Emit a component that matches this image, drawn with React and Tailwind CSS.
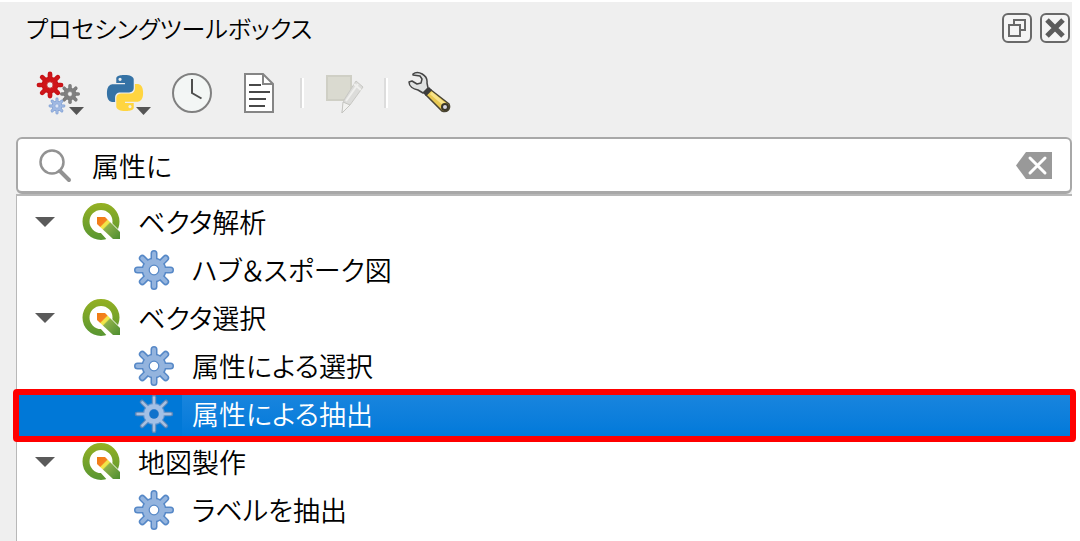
import React, { useState } from 'react';

const SPOKES = [0, 45, 90, 135, 180, 225, 270, 315];

const GROUPS = [
  { name: 'ベクタ解析', items: ['ハブ＆スポーク図'] },
  { name: 'ベクタ選択', items: ['属性による選択', '属性による抽出'] },
  { name: '地図製作', items: ['ラベルを抽出'] },
];

const SELECTED = '属性による抽出';

const PYTHON_HALF =
  'M14.25.18l.9.2.73.26.59.3.45.32.34.34.25.34.16.33.1.3.04.26.02.2-.01.13V8.5l-.05.63-.13.55-.21.46-.26.38-.3.31-.33.25-.35.19-.35.14-.33.1-.3.07-.26.04-.21.02H8.77l-.69.05-.59.14-.5.22-.41.27-.33.32-.27.35-.2.36-.15.37-.1.35-.07.32-.04.27-.02.21v3.06H3.17l-.21-.03-.28-.07-.32-.12-.35-.18-.36-.26-.36-.36-.35-.46-.32-.59-.28-.73-.21-.88-.14-1.05-.05-1.23.06-1.22.16-1.04.24-.87.32-.71.36-.57.4-.44.42-.33.42-.24.4-.16.36-.1.32-.05.24-.01h.16l.06.01h8.16v-.83H6.18l-.01-2.75-.02-.37.05-.34.11-.31.17-.28.25-.26.31-.23.38-.2.44-.18.51-.15.58-.12.64-.1.71-.06.77-.04.84-.02 1.27.05zm-6.3 1.98l-.23.33-.08.41.08.41.23.34.33.22.41.09.41-.09.33-.22.23-.34.08-.41-.08-.41-.23-.33-.33-.22-.41-.09-.41.09z';

// Gear centred on 0,0 with an outer radius of 20
const Gear = ({ fill, edge, hole, transform }) => (
  <g transform={transform} strokeLinecap="round">
    {SPOKES.map((a) => (
      <line key={a} y1="-8" y2="-16.5" stroke={edge} strokeWidth="7" transform={`rotate(${a})`} />
    ))}
    <circle r="12.5" fill={edge} />
    {SPOKES.map((a) => (
      <line key={a} y1="-8" y2="-16.5" stroke={fill} strokeWidth="4" transform={`rotate(${a})`} />
    ))}
    <circle r="11" fill={fill} />
    <circle r="4.8" fill={hole} stroke={edge} strokeWidth="1.2" />
  </g>
);

const AlgorithmIcon = ({ selected }) => (
  <svg className="h-10 w-10 shrink-0" viewBox="-20 -20 40 40">
    {selected ? (
      <g strokeLinecap="round">
        {SPOKES.map((a) => (
          <line key={a} y1="-10" y2="-17" stroke="#5f88b8" strokeWidth="4.5" transform={`rotate(${a})`} />
        ))}
        <circle r="11" fill="#5f93cf" />
        {SPOKES.map((a) => (
          <line key={a} y1="-10" y2="-16.5" stroke="#a9c0e0" strokeWidth="2.4" transform={`rotate(${a})`} />
        ))}
        <circle r="7.5" fill="none" stroke="#a3c0e6" strokeWidth="5" />
        <circle r="4.5" fill="#0f72cc" />
      </g>
    ) : (
      <Gear fill="#94b4de" edge="#5688c7" hole="#fff" />
    )}
  </svg>
);

const QgisIcon = () => (
  <svg className="h-[38px] w-[38px] shrink-0" viewBox="0 0 38 38">
    <defs>
      <linearGradient id="ring" x1="0" y1="1" x2="0" y2="37" gradientUnits="userSpaceOnUse">
        <stop offset="0" stopColor="#93b023" />
        <stop offset="1" stopColor="#589632" />
      </linearGradient>
      <linearGradient id="brush" x1="15" y1="14" x2="37" y2="36" gradientUnits="userSpaceOnUse">
        <stop offset="0" stopColor="#ee7913" />
        <stop offset="0.28" stopColor="#f58220" />
        <stop offset="0.32" stopColor="#f0e64a" />
        <stop offset="0.4" stopColor="#f0e64a" />
        <stop offset="0.44" stopColor="#8cb04a" />
        <stop offset="1" stopColor="#4f8f30" />
      </linearGradient>
    </defs>
    <circle cx="19" cy="18.500" r="15" fill="none" stroke="url(#ring)" strokeWidth="7" />
    <path d="M19 22l17 17H27L18 29zM24 14l14 14v3z" fill="#fff" />
    <path d="M15 14h8l15 15v7h-7L15 21z" fill="url(#brush)" />
  </svg>
);

const ToolboxIcon = () => (
  <svg className="h-12 w-12" viewBox="0 0 48 48">
    <Gear fill="#7f7f7f" edge="#777" hole="#efefef" transform="translate(34 25) scale(.5)" />
    <Gear fill="#a0b9e2" edge="#7f9fd4" hole="#dfe7f5" transform="translate(21 37) scale(.42)" />
    <Gear fill="#cf1519" edge="#c51216" hole="#efefef" transform="translate(14 16) scale(.67)" />
    <path d="M33 38h15l-7.500 8z" fill="#555" />
  </svg>
);

const PythonIcon = () => (
  <svg className="h-12 w-12" viewBox="0 0 48 48">
    <g transform="translate(3 6) scale(1.5)">
      <path d={PYTHON_HALF} fill="#3572a5" />
      <path d={PYTHON_HALF} fill="#ffd540" transform="rotate(180 12 12)" />
    </g>
    <path d="M32 38h15l-7.500 8z" fill="#555" />
  </svg>
);

const HistoryIcon = () => (
  <svg className="h-10 w-10" viewBox="0 0 40 40" fill="none">
    <circle cx="20" cy="20" r="19" fill="#f3f6f5" stroke="#808080" strokeWidth="2" />
    <path d="M20 6v14l9.500 5.500" stroke="#4f4f4f" strokeWidth="2" />
  </svg>
);

const ResultsIcon = () => (
  <svg className="h-10 w-[30px]" viewBox="0 0 30 40" fill="none">
    <path d="M1 1h18l10 10v28H1z" fill="#fff" stroke="#858585" strokeWidth="2" />
    <path d="M19 1v10h10" stroke="#858585" strokeWidth="2" />
    <path d="M5 12h12M5 19h21M5 26h17M5 33h16" stroke="#484848" strokeWidth="2" />
  </svg>
);

const EditInPlaceIcon = () => (
  <svg className="h-10 w-10" viewBox="0 0 40 40">
    <path d="M3 3h24v24H3z" fill="#dadad0" stroke="#cfcfc5" strokeWidth="2" />
    <path d="M32 8l7 6-13 18-8 8 2-13z" fill="#dcdcda" stroke="#c8c8c4" />
    <path d="M19 29l7 3-8 8z" fill="#f2f2f0" stroke="#c4c4c0" />
    <path d="M34 11L22 28M30 11l7 6" stroke="#efefed" strokeWidth="2" fill="none" />
  </svg>
);

const OptionsIcon = () => (
  <svg className="h-11 w-11" viewBox="0 0 44 44">
    <path
      d="M5 3C10-1 20 4 19 12l1 5-5 5-5-3C5 18 1 15 1 11l3-1 5 3 4-1 1-4-2-3-7-1z"
      fill="#e0e2e2"
      stroke="#444"
      strokeWidth="1.500"
      strokeLinejoin="round"
    />
    <path d="M23 19L41 33c2 5-2 9-7 7L18 24z" fill="#e9c952" stroke="#4a4534" strokeWidth="1.500" />
    <path d="M23 22l13 11" stroke="#f8e48a" strokeWidth="3" />
    <path d="M15 22l6-6 3 3-6 6z" fill="#3d3d3d" />
    <circle cx="37" cy="36" r="3" fill="#d7d7e4" stroke="#3b3728" strokeWidth="2" />
  </svg>
);

const FloatIcon = () => (
  <svg className="h-[30px] w-[30px]" viewBox="0 0 30 30" fill="none" stroke="#696969" strokeWidth="2">
    <rect x="1" y="1" width="28" height="28" rx="5" fill="#f5f5f5" />
    <path d="M12 12V7h11v10h-5" />
    <rect x="7" y="12" width="11" height="11" />
  </svg>
);

const CloseIcon = () => (
  <svg className="h-[30px] w-[30px]" viewBox="0 0 30 30" fill="none" stroke="#696969" strokeWidth="2">
    <rect x="1" y="1" width="28" height="28" rx="5" fill="#f5f5f5" />
    <path d="M7 7l16 16M23 7L7 23" stroke="#5c5c5c" strokeWidth="5" />
  </svg>
);

const Separator = () => (
  <div className="h-[30px] w-1 border-l-2 border-[#dcdcdc] bg-white" />
);

const TreeGroup = ({ group }) => {
  const [open, setOpen] = useState(true);

  return (
    <li>
      <div className="flex h-12 items-center">
        <button
          type="button"
          aria-label={group.name}
          aria-expanded={open}
          onClick={() => setOpen(!open)}
          className="flex h-12 w-14 shrink-0 items-center justify-center"
        >
          <svg className="h-[10px] w-5" viewBox="0 0 20 10">
            <path d="M0 0h20L10 10z" fill="#5a5a5a" />
          </svg>
        </button>
        <div className="ml-[9px] flex items-center gap-[18px]">
          <QgisIcon />
          <span>{group.name}</span>
        </div>
      </div>
      {open && (
        <ul>
          {group.items.map((item) => (
            <li key={item} className={item === SELECTED ? 'relative bg-[#0078d7] text-white' : ''}>
              <div className="flex h-12 items-center pl-[117px]">
                <AlgorithmIcon selected={item === SELECTED} />
                <span
                  className={
                    item === SELECTED
                      ? 'ml-2 flex h-12 flex-1 items-center bg-linear-to-b from-[#1a86de] to-[#0079da] pl-[10px]'
                      : 'ml-[18px]'
                  }
                >
                  {item}
                </span>
              </div>
              {item === SELECTED && (
                <div className="pointer-events-none absolute -top-px -right-1 -bottom-1 -left-1 rounded-sm border-6 border-[#ff0000]" />
              )}
            </li>
          ))}
        </ul>
      )}
    </li>
  );
};

const App = () => {
  const [query, setQuery] = useState('属性に');

  return (
    <div className="flex h-screen flex-col overflow-hidden bg-white pt-[2px] pr-2 font-['Noto_Sans_CJK_JP',sans-serif] text-[27px] leading-10 font-[350] text-black [font-feature-settings:'palt']">
      <div className="flex min-h-0 flex-1 flex-col bg-[#efefef] pl-4">
        <header className="flex h-[52px] shrink-0 items-center justify-between pr-[2px] pl-[10px]">
          <h1 className="text-[24px] font-[350]">プロセシングツールボックス</h1>
          <div className="flex gap-2">
            <button type="button" aria-label="フロート"><FloatIcon /></button>
            <button type="button" aria-label="閉じる"><CloseIcon /></button>
          </div>
        </header>

        <div className="flex h-[82px] shrink-0 items-center gap-5 pb-1 pl-5">
          <button type="button" aria-label="モデル"><ToolboxIcon /></button>
          <button type="button" aria-label="スクリプト"><PythonIcon /></button>
          <button type="button" aria-label="履歴"><HistoryIcon /></button>
          <button type="button" aria-label="結果ビューア" className="ml-3"><ResultsIcon /></button>
          <div className="ml-[6px]"><Separator /></div>
          <button type="button" aria-label="地物をその場で編集" disabled><EditInPlaceIcon /></button>
          <Separator />
          <button type="button" aria-label="オプション"><OptionsIcon /></button>
        </div>

        <div className="mt-px flex h-[57px] shrink-0 items-center rounded-md border-2 border-b-3 border-[#a8a8a8] bg-white pr-[18px] pl-5">
          <svg className="h-9 w-9 shrink-0" viewBox="0 0 36 36" fill="none" stroke="#929292">
            <circle cx="14" cy="15" r="11.500" strokeWidth="2.500" />
            <path d="M22 24l9 9" strokeWidth="4" strokeLinecap="round" />
          </svg>
          <input
            type="text"
            aria-label="検索"
            value={query}
            onChange={(e) => setQuery(e.target.value)}
            className="ml-[18px] h-12 min-w-0 flex-1 outline-none"
          />
          <button type="button" aria-label="クリア" onClick={() => setQuery('')}>
            <svg className="h-[27px] w-9" viewBox="0 0 36 27">
              <path d="M0 13.500L10 0h26v27H10z" fill="#999" />
              <path d="M14 6l15 15M29 6L14 21" stroke="#fff" strokeWidth="3" strokeLinecap="round" />
            </svg>
          </button>
        </div>

        <ul className="flex-1 border-t-2 border-l border-[#b8b8b8] bg-white pt-[2px]">
          {GROUPS.map((group) => (
            <TreeGroup key={group.name} group={group} />
          ))}
        </ul>
      </div>
    </div>
  );
};

export default App;
